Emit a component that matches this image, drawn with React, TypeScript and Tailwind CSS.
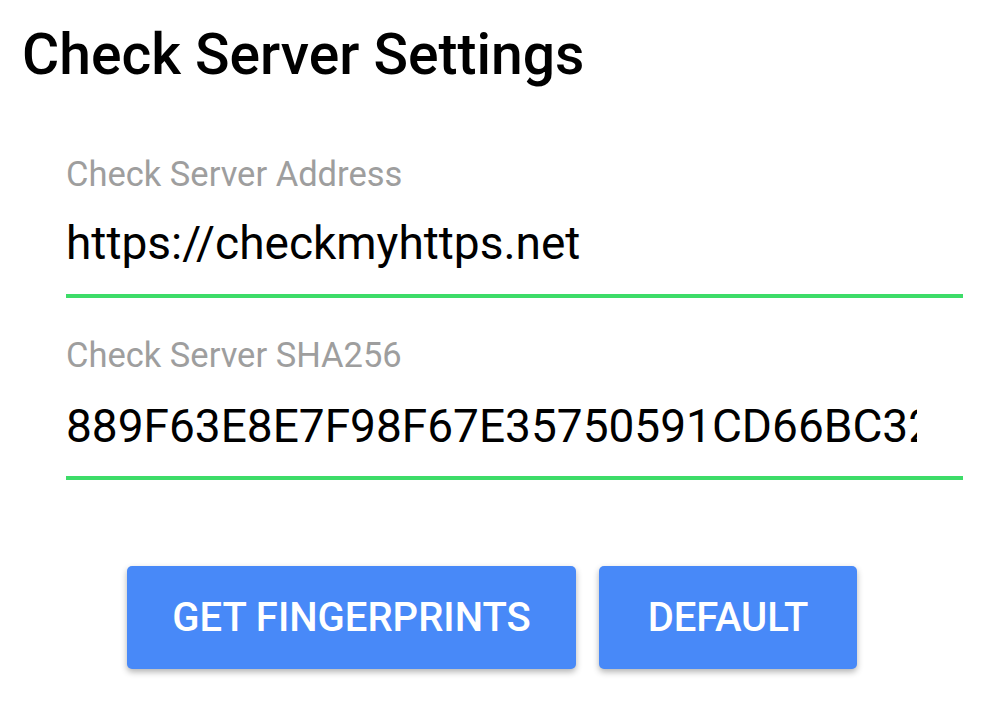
export default function App() {
  return (
    <div className="w-[984px] h-[710px] bg-white font-['Roboto',sans-serif] text-black overflow-hidden">
      <h1 className="pt-[26px] pl-[22px] text-[57px] leading-[57px] font-medium">Check Server Settings</h1>

      <div className="pl-[66px] pr-[21px]">
        {/* address */}
        <div className="mt-[74px] text-[34.5px] leading-[34px] text-[#9e9e9e]">Check Server Address</div>
        <div className="mt-[30px] text-[46px] leading-[45px] whitespace-nowrap">https://checkmyhttps.net</div>
        <div className="mt-[28px] h-[4px] bg-[#3ddc68]" />

        {/* sha */}
        <div className="mt-[40px] text-[34.5px] leading-[34px] text-[#9e9e9e]">Check Server SHA256</div>
        <div className="mt-[32px] w-[851px] text-[46px] leading-[45px] whitespace-nowrap overflow-hidden">
          889F63E8E7F98F67E35750591CD66BC32A8B9F1E04C7D2A6
        </div>
        <div className="mt-[27px] h-[4px] bg-[#3ddc68]" />
      </div>

      <div className="mt-[86px] flex justify-center gap-[23px]">
        <button className="w-[449px] h-[103px] rounded-[5px] bg-[#4889f8] text-white text-[40px] font-medium shadow-[0_3px_6px_rgba(0,0,0,0.3)]">
          GET FINGERPRINTS
        </button>
        <button className="w-[258px] h-[103px] rounded-[5px] bg-[#4889f8] text-white text-[40px] font-medium shadow-[0_3px_6px_rgba(0,0,0,0.3)]">
          DEFAULT
        </button>
      </div>
    </div>
  );
}
